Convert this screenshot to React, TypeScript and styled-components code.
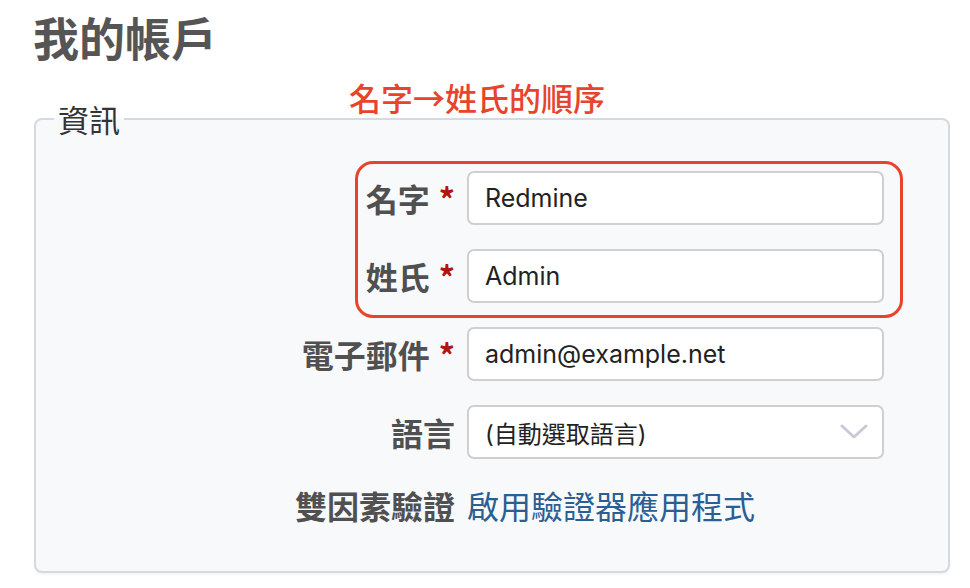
import React from "react";
import styled, { createGlobalStyle } from "styled-components";

const Global = createGlobalStyle`
  html, body { margin: 0; padding: 0; background: #ffffff; }
  body { font-family: "Noto Sans CJK TC", "Noto Sans", sans-serif; color: #333; }
  * { box-sizing: border-box; }
`;

const Page = styled.div`
  position: relative;
  width: 970px;
  height: 588px;
  padding: 7px 20px 0 33px;
  overflow: hidden;
`;

const Title = styled.h2`
  margin: 0;
  font-size: 46px;
  line-height: 58px;
  font-weight: 700;
  color: #555;
`;

const Box = styled.fieldset`
  margin: 34px 0 0 1px;
  padding: 0 0 44px 0;
  width: 916px;
  border: 2px solid #d5dae0;
  border-radius: 8px;
  background: #f8f9fb;
  box-shadow: 0 2px 2px rgba(0, 0, 0, 0.04);
`;

const Legend = styled.legend`
  margin-left: 18px;
  padding: 0 4px;
  font-size: 31px;
  line-height: 40px;
  color: #333;
`;

const Form = styled.div`
  display: grid;
  grid-template-columns: 419px 417px;
  column-gap: 12px;
  row-gap: 24px;
  align-items: center;
  padding-top: 32px;
`;

const Label = styled.label`
  justify-self: end;
  font-size: 32px;
  line-height: 44px;
  font-weight: 700;
  color: #505050;
  white-space: nowrap;
`;

const Req = styled.span`
  color: #b3140c;
  margin-left: 9px;
`;

const Input = styled.input`
  height: 54px;
  width: 100%;
  padding: 0 16px;
  border: 2px solid #cfcfcf;
  border-radius: 7px;
  background: #fff;
  font-family: "Inter", "Noto Sans CJK TC", sans-serif;
  font-size: 25px;
  color: #222;
  outline: none;
`;

const SelectBox = styled.div`
  height: 54px;
  width: 100%;
  padding: 0 14px 0 16px;
  border: 2px solid #cfcfcf;
  border-radius: 7px;
  background: #fff;
  display: flex;
  align-items: center;
  justify-content: space-between;
  font-family: "Inter", "Noto Sans CJK TC", sans-serif;
  font-size: 24px;
  color: #222;
`;

const Link = styled.a`
  font-size: 32px;
  line-height: 44px;
  color: #2b5e94;
  text-decoration: none;
  white-space: nowrap;
`;

const Note = styled.div`
  position: absolute;
  left: 349px;
  top: 75px;
  font-size: 32px;
  line-height: 44px;
  font-weight: 500;
  color: #e8432c;
  white-space: nowrap;
`;

const Highlight = styled.div`
  position: absolute;
  left: 355px;
  top: 161px;
  width: 548px;
  height: 157px;
  border: 3px solid #e8432c;
  border-radius: 18px;
  pointer-events: none;
`;

const Chevron = () => (
  <svg width="28" height="16" viewBox="0 0 28 16" fill="none">
    <polyline points="2,2 14,13 26,2" stroke="#c9c9d9" strokeWidth="3" strokeLinecap="round" strokeLinejoin="round" />
  </svg>
);

export default function App() {
  return (
    <Page>
      <Global />
      <Title>我的帳戶</Title>
      <Box>
        <Legend>資訊</Legend>
        <Form>
          <Label>名字<Req>*</Req></Label>
          <Input defaultValue="Redmine" />
          <Label>姓氏<Req>*</Req></Label>
          <Input defaultValue="Admin" />
          <Label>電子郵件<Req>*</Req></Label>
          <Input defaultValue="admin@example.net" />
          <Label>語言</Label>
          <SelectBox>
            <span>(自動選取語言)</span>
            <Chevron />
          </SelectBox>
          <Label>雙因素驗證</Label>
          <Link href="#">啟用驗證器應用程式</Link>
        </Form>
      </Box>
      <Note>名字→姓氏的順序</Note>
      <Highlight />
    </Page>
  );
}
